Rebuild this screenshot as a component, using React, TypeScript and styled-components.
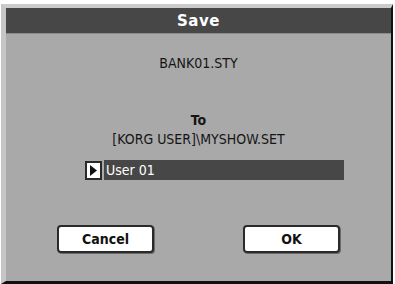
import React from 'react';
import styled, { createGlobalStyle } from 'styled-components';

const GlobalStyle = createGlobalStyle`
  html, body {
    margin: 0;
    padding: 0;
    background: #ffffff;
  }
  body {
    font-family: 'DejaVu Sans Condensed', 'DejaVu Sans', sans-serif;
  }
`;

const Dialog = styled.div`
  box-sizing: border-box;
  width: 392px;
  height: 280px;
  margin: 4px 0 0 1px;
  border-top: 4px solid #cbcbcb;
  border-left: 5px solid #c6c6c6;
  border-right: 2px solid #111111;
  border-bottom: 3px solid #111111;
  background: #a9a9a9;
  display: flex;
  flex-direction: column;
`;

const TitleBar = styled.div`
  height: 25px;
  background: #474747;
  color: #ffffff;
  font-family: 'DejaVu Sans', sans-serif;
  font-weight: bold;
  font-size: 15px;
  letter-spacing: 0.5px;
  display: flex;
  align-items: center;
  justify-content: center;
  border-bottom: 1px solid #8a8a8a;
`;

const Body = styled.div`
  flex: 1;
  display: flex;
  flex-direction: column;
  align-items: center;
  padding-top: 20px;
  color: #151515;
`;

const Line = styled.div<{ $bold?: boolean; $gap?: number }>`
  font-size: 14px;
  line-height: 18px;
  font-weight: ${({ $bold }) => ($bold ? 'bold' : 'normal')};
  margin-top: ${({ $gap }) => $gap ?? 0}px;
`;

const SelectRow = styled.div`
  display: flex;
  align-items: center;
  gap: 2px;
  margin-top: 12px;
  align-self: flex-start;
  margin-left: 79px;
`;

const ArrowBox = styled.div`
  box-sizing: border-box;
  width: 17px;
  height: 19px;
  background: #ffffff;
  border: 2px solid #2a2a2a;
  display: flex;
  align-items: center;
  justify-content: center;
`;

const ValueBar = styled.div`
  box-sizing: border-box;
  width: 240px;
  height: 20px;
  background: #474747;
  color: #ffffff;
  font-size: 14px;
  display: flex;
  align-items: center;
  padding-left: 2px;
`;

const Buttons = styled.div`
  display: flex;
  gap: 89px;
  margin-top: 45px;
`;

const Button = styled.div`
  box-sizing: border-box;
  width: 97px;
  height: 28px;
  background: #ffffff;
  border: 2px solid #2a2a2a;
  border-radius: 4px;
  box-shadow: 1px 1px 0 #6a6a6a;
  display: flex;
  align-items: center;
  justify-content: center;
  font-weight: bold;
  font-size: 14px;
  color: #111111;
`;

export default function App() {
  return (
    <>
      <GlobalStyle />
      <Dialog>
        <TitleBar>Save</TitleBar>
        <Body>
          <Line>BANK01.STY</Line>
          <Line $bold $gap={39}>To</Line>
          <Line $gap={1}>[KORG USER]\MYSHOW.SET</Line>
          <SelectRow>
            <ArrowBox>
              <svg width="7" height="11" viewBox="0 0 7 11">
                <path d="M0 0 L7 5.5 L0 11 Z" fill="#111111" />
              </svg>
            </ArrowBox>
            <ValueBar>User 01</ValueBar>
          </SelectRow>
          <Buttons>
            <Button>Cancel</Button>
            <Button>OK</Button>
          </Buttons>
        </Body>
      </Dialog>
    </>
  );
}
